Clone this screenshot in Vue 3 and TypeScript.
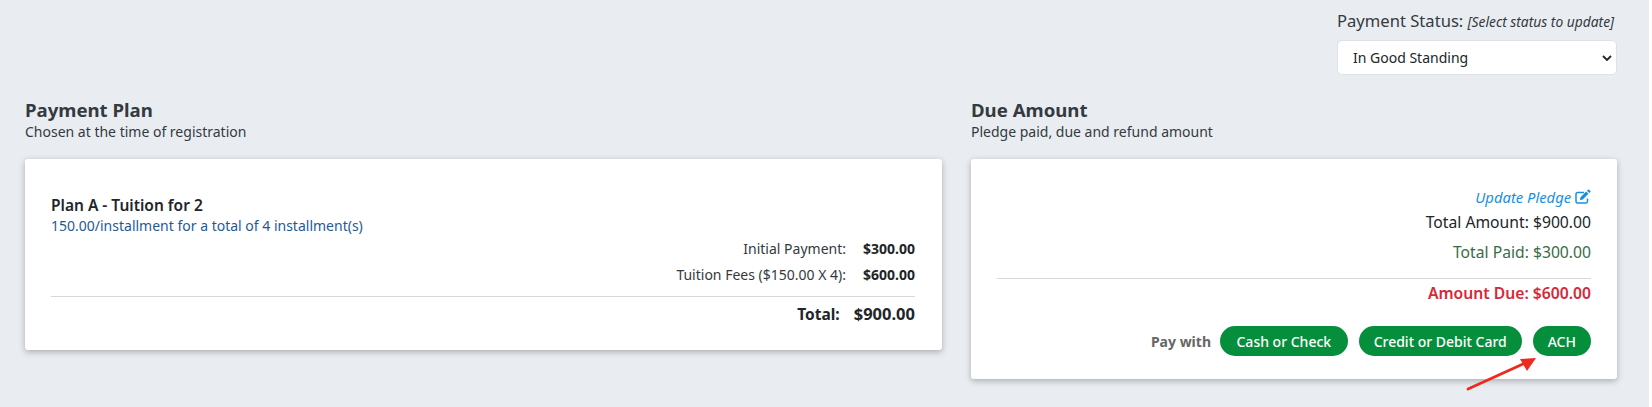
<script setup lang="ts">
const planRows = [
  { label: 'Initial Payment:', value: '$300.00' },
  { label: 'Tuition Fees ($150.00 X 4):', value: '$600.00' },
]
const payMethods = ['Cash or Check', 'Credit or Debit Card', 'ACH']
</script>

<template>
  <div class="page">
    <div class="status">
      <div class="status-label">Payment Status: <em>[Select status to update]</em></div>
      <div class="select-wrap">
        <select class="status-select">
          <option>In Good Standing</option>
        </select>
        <svg class="chevron" viewBox="0 0 10 6" width="10" height="6" fill="none" stroke="#212529" stroke-width="1.800">
          <path d="M1 1l4 4 4-4" />
        </svg>
      </div>
    </div>
    <div class="columns">
      <section class="col plan-col">
        <h2>Payment Plan</h2>
        <p class="sub">Chosen at the time of registration</p>
        <div class="card plan-card">
          <div class="plan-name">Plan A - Tuition for 2</div>
          <div class="plan-desc">150.00/installment for a total of 4 installment(s)</div>
          <div v-for="r in planRows" :key="r.label" class="plan-row">
            <span>{{ r.label }}</span><b>{{ r.value }}</b>
          </div>
          <hr class="rule plan-rule" />
          <div class="plan-total"><b>Total:</b><b class="total-value">$900.00</b></div>
        </div>
      </section>
      <section class="col due-col">
        <h2>Due Amount</h2>
        <p class="sub">Pledge paid, due and refund amount</p>
        <div class="card due-card">
          <a class="update">Update Pledge
            <svg class="edit" viewBox="0 0 16 14" width="16" height="14" fill="none" stroke="currentColor">
              <path d="M12.500 8.500V11.500a1.500 1.500 0 0 1-1.500 1.500H2.500A1.500 1.500 0 0 1 1 11.500V4a1.500 1.500 0 0 1 1.500-1.500H9" stroke-width="1.500" />
              <path d="M5.500 7.200 4.800 10.200l3-.7 5.700-5.700-2.300-2.300zM12 .8l2.300 2.300 1.100-1.100a.8.8 0 0 0 0-1.100L14.200-.2a.8.8 0 0 0-1.100 0z" fill="currentColor" stroke="none" />
            </svg>
          </a>
          <div class="due-line total-line">Total Amount: $900.00</div>
          <div class="due-line paid">Total Paid: $300.00</div>
          <hr class="rule due-rule" />
          <div class="due-line owed">Amount Due: $600.00</div>
          <div class="pay">
            <span class="pay-label">Pay with</span>
            <button v-for="m in payMethods" :key="m" class="pay-btn">{{ m }}</button>
          </div>
        </div>
      </section>
    </div>
    <svg class="arrow" viewBox="0 0 80 45" width="80" height="45">
      <path d="M8 39 L63 14" stroke="#ee2a1f" stroke-width="2.800" stroke-linecap="round" />
      <path d="M76 8 L60 9 L67 21 Z" fill="#ee2a1f" />
    </svg>
  </div>
</template>

<style>
html, body { margin: 0; background: #fff; }
</style>

<style scoped>
.page {
  position: relative;
  width: 1649px;
  height: 407px;
  box-sizing: border-box;
  padding: 10px 32px 0 25px;
  background: #e9edf1;
  font-family: "Noto Sans", "Open Sans", sans-serif;
  font-size: 14px;
  color: #212529;
  overflow: hidden;
}
.status { width: 280px; margin-left: auto; }
.status-label { font-size: 16.600px; color: #343a40; line-height: 22px; white-space: nowrap; }
.status-label em { font-size: 13.800px; }
.select-wrap { position: relative; margin-top: 7px; }
.status-select {
  display: block;
  width: 100%;
  height: 35px;
  padding: 0 15px;
  appearance: none;
  background: #fff;
  border: 1px solid #dee2e6;
  border-radius: 5px;
  font: inherit;
  color: #212529;
}
.chevron { position: absolute; right: 5px; top: 15px; pointer-events: none; }
.columns { display: flex; gap: 29px; margin-top: 23px; }
.plan-col { width: 917px; }
.due-col { width: 646px; }
h2 { margin: 0 0 1px; font-size: 18.600px; line-height: 24px; font-weight: 700; color: #343a40; }
.sub { margin: 0 0 18px; font-size: 14px; line-height: 18px; color: #343a40; }
.card {
  background: #fff;
  border-radius: 3px;
  box-shadow: 0 2px 6px rgba(0, 0, 0, .28);
  box-sizing: border-box;
}
.plan-card { height: 191px; padding: 36px 27px 0 26px; }
.due-card { height: 220px; padding: 28px 26px 0; text-align: right; }
.plan-name { font-size: 15.500px; font-weight: 600; line-height: 20px; }
.plan-desc { margin-top: 1px; color: #1f5a93; line-height: 20px; }
.plan-row { display: flex; justify-content: flex-end; gap: 13px; line-height: 26px; color: #343a40; }
.plan-row b { width: 56px; text-align: right; color: #212529; }
.rule { border: 0; border-top: 1px solid #d5d9dc; margin: 0; }
.plan-rule { margin-top: 8px; }
.plan-total { display: flex; justify-content: flex-end; align-items: baseline; gap: 14px; margin-top: 6px; font-size: 15.500px; line-height: 22px; }
.total-value { font-size: 16.500px; }
.update { display: block; color: #1a8fe0; font-style: italic; font-size: 14.800px; line-height: 20px; }
.edit { vertical-align: -1px; overflow: visible; }
.due-line { font-size: 15.700px; line-height: 24px; }
.total-line { margin-top: 3px; }
.paid { color: #3a6b48; margin-top: 6px; }
.owed { color: #d62839; font-weight: 600; }
.due-rule { margin: 14px 0 2px; }
.pay { display: flex; justify-content: flex-end; align-items: center; gap: 11px; margin-top: 21px; }
.pay-label { font-weight: 700; color: #666; margin-right: -2px; }
.pay-btn {
  height: 30px;
  padding: 0 15px;
  border: 0;
  border-radius: 15px;
  background: #058f3d;
  color: #fff;
  font: inherit;
  font-weight: 500;
}
.pay-btn:first-of-type { padding: 0 16.500px; }
.arrow { position: absolute; left: 1460px; top: 350px; }
</style>
